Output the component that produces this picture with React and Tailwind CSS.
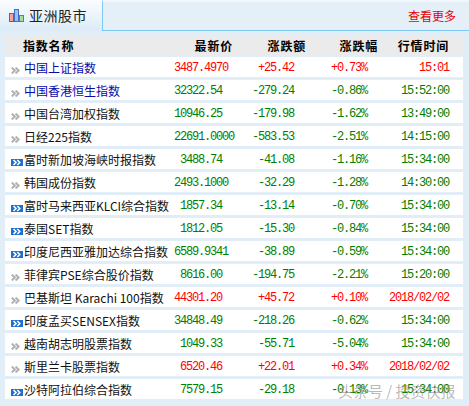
const rows = [
  { name: '中国上证指数', price: '3487.4970', chg: '+25.42', pct: '+0.73%', time: '15:01', up: true, icon: 'gray', link: true },
  { name: '中国香港恒生指数', price: '32322.54', chg: '-279.24', pct: '-0.86%', time: '15:52:00', icon: 'gray', link: true },
  { name: '中国台湾加权指数', price: '10946.25', chg: '-179.98', pct: '-1.62%', time: '13:49:00', icon: 'gray' },
  { name: '日经225指数', price: '22691.0000', chg: '-583.53', pct: '-2.51%', time: '14:15:00', icon: 'gray' },
  { name: '富时新加坡海峡时报指数', price: '3488.74', chg: '-41.08', pct: '-1.16%', time: '15:34:00', icon: 'blue' },
  { name: '韩国成份指数', price: '2493.1000', chg: '-32.29', pct: '-1.28%', time: '14:30:00', icon: 'gray' },
  { name: '富时马来西亚KLCI综合指数', price: '1857.34', chg: '-13.14', pct: '-0.70%', time: '15:34:00', icon: 'blue' },
  { name: '泰国SET指数', price: '1812.05', chg: '-15.30', pct: '-0.84%', time: '15:34:00', icon: 'blue' },
  { name: '印度尼西亚雅加达综合指数', price: '6589.9341', chg: '-38.89', pct: '-0.59%', time: '15:34:00', icon: 'blue' },
  { name: '菲律宾PSE综合股价指数', price: '8616.00', chg: '-194.75', pct: '-2.21%', time: '15:20:00', icon: 'gray' },
  { name: '巴基斯坦 Karachi 100指数', price: '44301.20', chg: '+45.72', pct: '+0.10%', time: '2018/02/02', up: true, icon: 'gray' },
  { name: '印度孟买SENSEX指数', price: '34848.49', chg: '-218.26', pct: '-0.62%', time: '15:34:00', icon: 'blue' },
  { name: '越南胡志明股票指数', price: '1049.33', chg: '-55.71', pct: '-5.04%', time: '15:34:00', icon: 'gray' },
  { name: '斯里兰卡股票指数', price: '6520.46', chg: '+22.01', pct: '+0.34%', time: '2018/02/02', up: true, icon: 'gray' },
  { name: '沙特阿拉伯综合指数', price: '7579.15', chg: '-29.18', pct: '-0.13%', time: '15:34:00', icon: 'blue' },
];

const GrayArrow = () => (
  <svg width="9" height="7" viewBox="0 0 9 7">
    <path d="M0.8 0.6 L3.8 3.5 L0.8 6.4 M4.6 0.6 L7.6 3.5 L4.6 6.4" fill="none" stroke="#b0b0b0" strokeWidth="2" />
  </svg>
);

const BlueArrow = () => (
  <svg width="12" height="7" viewBox="0 0 12 7">
    <rect width="12" height="7" fill="#1d6fd1" />
    <path d="M2.5 1 L5 3.5 L2.5 6 M6.3 1 L8.8 3.5 L6.3 6" fill="none" stroke="#fff" strokeWidth="1.6" />
  </svg>
);

const ChartIcon = () => (
  <svg width="16" height="13" viewBox="0 0 16 13">
    <rect x="0.5" y="4.5" width="4" height="8" fill="#f7a0a0" stroke="#d83a3a" />
    <rect x="5.5" y="0.5" width="4" height="12" fill="#9fbef2" stroke="#3a6fd0" />
    <rect x="10.5" y="6.5" width="4" height="6" fill="#a6dca0" stroke="#3f9f3a" />
  </svg>
);

const mono = "font-['Liberation_Mono',monospace] text-[12px] tracking-[-1.2px] whitespace-nowrap";

export default function App() {
  return (
    <div className="relative w-[469px] h-[406px] overflow-hidden bg-[#e1edf7] font-['Noto_Sans_CJK_SC',sans-serif]">
      <div className="flex h-[31px]">
        <div className="w-[102px] flex items-center pl-[9px] gap-[4px] bg-gradient-to-b from-[#fbfdfe] to-[#dcebf7]">
          <ChartIcon />
          <span className="text-[14px] text-[#222] tracking-[0.5px]">亚洲股市</span>
        </div>
        <div className="flex-1 flex items-center justify-end pr-[13px] bg-[#e4eff7] border-l border-b border-[#7ec8f2] border-t-2 border-t-[#f1f7fb]">
          <span className="text-[12px] text-[#e60000]">查看更多</span>
        </div>
      </div>

      <div className="ml-[5px] w-[458px] mt-[5px]">
        <div className="flex items-center h-[20px] bg-[#ebebeb] text-[12px] font-bold text-black tracking-[0.8px]">
          <div className="w-[180px] pl-[18px]">指数名称</div>
          <div className="w-[48px] text-right">最新价</div>
          <div className="w-[73px] text-right">涨跌额</div>
          <div className="w-[72px] text-right">涨跌幅</div>
          <div className="w-[71px] text-right">行情时间</div>
        </div>

        <div className="flex flex-col gap-[3px] mt-[1px]">
          {rows.map((r) => {
            const color = r.up ? 'text-[#ff0000]' : 'text-[#008000]';
            return (
              <div key={r.name} className="flex h-[20px] bg-white items-center">
                <div className="w-[19px] h-full flex items-end pb-[3px] pl-[6px]">
                  {r.icon === 'blue' ? <BlueArrow /> : <GrayArrow />}
                </div>
                <div className={`w-[150px] text-[12px] pt-[2px] whitespace-nowrap ${r.link ? 'text-[#0a0aa8]' : 'text-[#111]'}`}>
                  {r.name}
                </div>
                <div className={`w-[48px] text-right pt-[2px] ${mono} ${color}`}>{r.price}</div>
                <div className={`w-[72px] text-right pt-[2px] ${mono} ${color}`}>{r.chg}</div>
                <div className={`w-[73px] text-right pt-[2px] ${mono} ${color}`}>{r.pct}</div>
                <div className={`w-[82px] text-right pt-[2px] ${mono} ${color}`}>{r.time}</div>
              </div>
            );
          })}
        </div>
      </div>

      <div className="absolute left-[338px] top-[381px] text-[15px] leading-[20px] text-[#8a8a8a]/60 whitespace-nowrap">
        头条号 / 投资快报
      </div>
    </div>
  );
}
